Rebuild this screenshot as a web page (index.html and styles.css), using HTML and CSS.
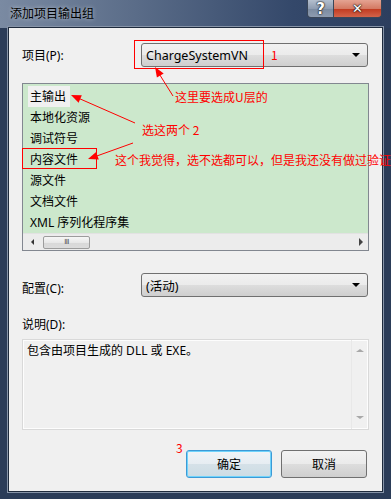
FILE: index.html
```html
<!DOCTYPE html>
<html lang="zh-CN">
<head>
    <meta charset="UTF-8">
    <title>添加项目输出组</title>
    <link rel="stylesheet" href="styles.css">
</head>
<body>
    <div class="window">
        <div class="titlebar">
            <span class="title">添加项目输出组</span>
            <div class="caption-btns">
                <span class="cap-btn help">?</span>
                <span class="cap-btn close">✕</span>
            </div>
        </div>

        <div class="client">
            <div class="field-row first">
                <label class="field-label">项目(P):</label>
                <div class="combo"><span>ChargeSystemVN</span><i class="combo-arrow"></i></div>
            </div>

            <div class="listbox">
                <ul class="list-items">
                    <li class="selected">主输出</li>
                    <li>本地化资源</li>
                    <li>调试符号</li>
                    <li>内容文件</li>
                    <li>源文件</li>
                    <li>文档文件</li>
                    <li>XML 序列化程序集</li>
                </ul>
                <div class="hscroll">
                    <span class="arrow-left"></span>
                    <span class="thumb">III</span>
                    <span class="arrow-right"></span>
                </div>
            </div>

            <div class="field-row config">
                <label class="field-label low">配置(C):</label>
                <div class="combo"><span>(活动)</span><i class="combo-arrow"></i></div>
            </div>

            <div class="desc-label">说明(D):</div>
            <div class="desc-box">
                <p class="desc-text">包含由项目生成的 DLL 或 EXE。</p>
                <div class="vscroll">
                    <span class="arrow-up"></span>
                    <span class="arrow-down"></span>
                </div>
            </div>

            <div class="button-row">
                <button class="btn default">确定</button>
                <button class="btn">取消</button>
            </div>
        </div>

        <!-- annotations drawn on top of the screenshot -->
        <div class="mark mark-combo"></div>
        <div class="mark mark-item"></div>
        <span class="note note-1">1</span>
        <span class="note note-u">这里要选成U层的</span>
        <span class="note note-two">选这两个 2</span>
        <span class="note note-long">这个我觉得，选不选都可以，但是我还没有做过验证</span>
        <span class="note note-3">3</span>
        <svg class="arrows" width="391" height="499" viewBox="0 0 391 499">
            <line x1="173" y1="96" x2="158" y2="72" stroke="#ff0000" stroke-width="1"/>
            <polygon points="155,67 156.9,77.6 163.7,73.4" fill="#ff0000"/>
            <line x1="135" y1="123" x2="78" y2="98" stroke="#ff0000" stroke-width="1"/>
            <polygon points="71,95 78.6,102.7 81.8,95.3" fill="#ff0000"/>
            <line x1="133" y1="143" x2="94" y2="157" stroke="#ff0000" stroke-width="1"/>
            <polygon points="88,159 98.8,159.5 96.1,151.9" fill="#ff0000"/>
        </svg>
    </div>
</body>
</html>
```

FILE: styles.css
```css
body { margin: 0; overflow: hidden; background: #fff; font-family: "Noto Sans", "Noto Sans CJK SC", sans-serif; font-size: 12px; color: #000; }
.window { position: relative; width: 391px; height: 499px; box-sizing: border-box; padding: 0 8px 7px 8px; display: flex; flex-direction: column; background: linear-gradient(to right, #7a8aa2 0%, #5a6c88 35%, #34486a 75%, #2c3e5e 100%) top / 100% 28px no-repeat, #2b3c58; }
.titlebar { height: 27px; display: flex; justify-content: space-between; align-items: flex-start; }
.title { margin: 6px 0 0 2px; font-size: 12px; line-height: 16px; color: #000; text-shadow: 0 0 4px rgba(255,255,255,0.6); }
.caption-btns { display: flex; margin-right: 1px; }
.cap-btn { height: 18px; box-sizing: border-box; display: flex; justify-content: center; align-items: center; color: #fff; font-weight: bold; font-family: "DejaVu Sans", sans-serif; border: 1px solid #3a4658; border-top: none; text-shadow: 0 0 1px #222, 0 0 1px #222, 0 0 2px #000; }
.help { width: 27px; font-size: 15px; border-radius: 0 0 0 4px; background: linear-gradient(#b4bfce, #8f9db2 50%, #7a8aa0 51%, #8d9bb0); }
.close { width: 48px; font-size: 13px; border-left: none; border-radius: 0 0 4px 0; background: linear-gradient(#e4a392, #d47a64 50%, #c0391f 51%, #d3634a); }

.client { flex: 1; background: #f0f0f0; border: 1px solid #1e2a3c; box-shadow: 0 0 0 1px #8794a8; padding: 0 13px; display: flex; flex-direction: column; }
.field-row { display: flex; align-items: center; height: 24px; }
.field-row.first { margin-top: 15px; }
.field-row.config { margin-top: 22px; }
.field-label { width: 119px; flex: none; }
.field-label.low { padding-top: 6px; }
.combo { flex: 1; height: 24px; box-sizing: border-box; border: 1px solid #707070; border-radius: 3px; padding: 0 4px; margin-right: 1px; display: flex; align-items: center; justify-content: space-between; background: linear-gradient(#f2f2f2, #ebebeb 50%, #dddddd 51%, #cfcfcf); }
.combo span { font-size: 12.5px; }
.combo-arrow { width: 0; height: 0; border-left: 4px solid transparent; border-right: 4px solid transparent; border-top: 4px solid #000; margin-right: 3px; }

.listbox { margin-top: 16px; height: 168px; box-sizing: border-box; border: 1px solid #828790; background: #cce8cc; display: flex; flex-direction: column; }
.list-items { list-style: none; margin: 0; padding: 2px 0 0 5px; flex: 1; }
.list-items li { height: 21px; line-height: 21px; padding-left: 2px; width: max-content; }
.list-items li.selected { background: #f0f0f0; padding-right: 4px; }
.hscroll { height: 16px; background: #ececec; border-top: 1px solid #e2e2e2; display: flex; align-items: center; padding: 0 5px 0 8px; }
.arrow-left { width: 0; height: 0; border-top: 3px solid transparent; border-bottom: 3px solid transparent; border-right: 3px solid #333; }
.thumb { width: 47px; height: 13px; margin-left: 9px; box-sizing: border-box; border: 1px solid #9c9c9c; border-radius: 2px; background: linear-gradient(#f6f6f6, #e8e8e8 50%, #d8d8d8 51%, #dcdcdc); font-size: 7px; line-height: 11px; text-align: center; color: #444; letter-spacing: -0.5px; font-family: "DejaVu Sans", sans-serif; }
.arrow-right { margin-left: auto; width: 0; height: 0; border-top: 4px solid transparent; border-bottom: 4px solid transparent; border-left: 4px solid #444; }

.desc-label { margin-top: 21px; height: 14px; line-height: 14px; }
.desc-box { margin-top: 7px; height: 91px; box-sizing: border-box; border: 1px solid #d9d9d9; box-shadow: inset 0 0 0 1px #fdfdfd; display: flex; }
.desc-text { flex: 1; margin: 0; padding: 3px 4px; line-height: 16px; }
.vscroll { width: 16px; border-left: 1px solid #e8e8e8; display: flex; flex-direction: column; justify-content: space-between; align-items: center; padding: 9px 0 10px; }
.arrow-up { width: 0; height: 0; border-left: 4px solid transparent; border-right: 4px solid transparent; border-bottom: 3px solid #a8a8a8; }
.arrow-down { width: 0; height: 0; border-left: 4px solid transparent; border-right: 4px solid transparent; border-top: 3px solid #a8a8a8; }

.button-row { margin-top: 20px; display: flex; justify-content: flex-end; gap: 9px; padding-right: 2px; }
.btn { width: 86px; height: 28px; box-sizing: border-box; border: 1px solid #707070; border-radius: 3px; font-family: "Noto Sans", "Noto Sans CJK SC", sans-serif; font-size: 12px; color: #000; padding: 0; background: linear-gradient(#f2f2f2, #ebebeb 50%, #dddddd 51%, #cfcfcf); }
.btn.default { border-color: #3c9ad6; box-shadow: inset 0 0 0 1px #6fd3fb; background: linear-gradient(#f0f4f7, #e6edf2 50%, #d5e1e8 51%, #ccdce4); }

.mark { position: absolute; border: 1px solid #ff0000; pointer-events: none; }
.mark-combo { left: 134px; top: 40px; width: 128px; height: 27px; }
.mark-item { left: 22px; top: 148px; width: 73px; height: 19px; }
.note { position: absolute; color: #ff0000; font-size: 12px; line-height: 14px; white-space: nowrap; font-family: "Noto Sans CJK SC", sans-serif; }
.note-1 { left: 271px; top: 48px; }
.note-u { left: 175px; top: 90px; }
.note-two { left: 142px; top: 123px; }
.note-long { left: 115px; top: 153px; }
.note-3 { left: 176px; top: 441px; }
.arrows { position: absolute; left: 0; top: 0; pointer-events: none; }
```
